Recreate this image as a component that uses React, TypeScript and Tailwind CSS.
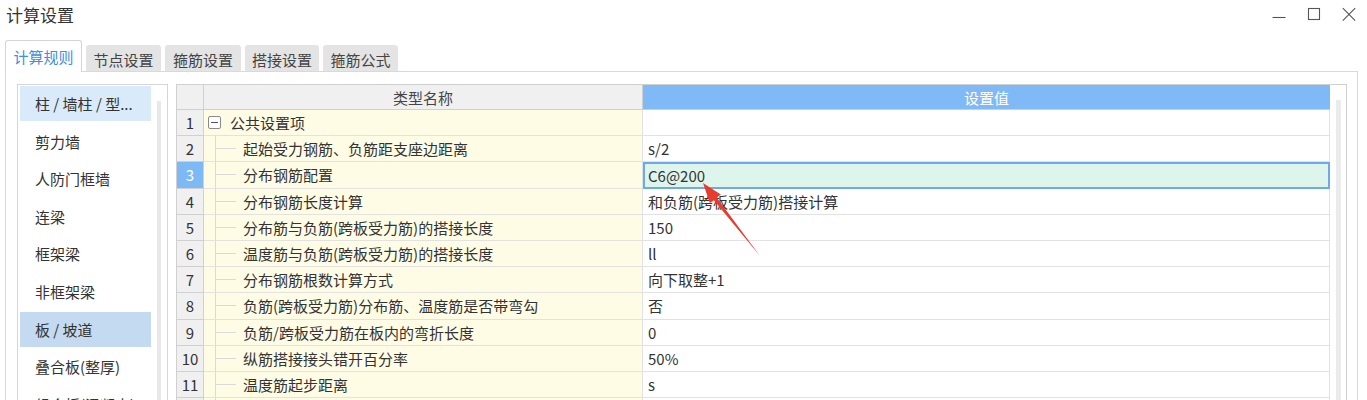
import React from "react"

const navItems = [
  "柱 / 墙柱 / 型...",
  "剪力墙",
  "人防门框墙",
  "连梁",
  "框架梁",
  "非框架梁",
  "板 / 坡道",
  "叠合板(整厚)",
  "组合板(混凝土)",
]

const tabs = [
  { label: "节点设置", w: "w-[75px]" },
  { label: "箍筋设置", w: "w-[76px]" },
  { label: "搭接设置", w: "w-[74px]" },
  { label: "箍筋公式", w: "w-[75px]" },
]

const rows = [
  { name: "公共设置项", value: "", group: true },
  { name: "起始受力钢筋、负筋距支座边距离", value: "s/2" },
  { name: "分布钢筋配置", value: "C6@200" },
  { name: "分布钢筋长度计算", value: "和负筋(跨板受力筋)搭接计算" },
  { name: "分布筋与负筋(跨板受力筋)的搭接长度", value: "150" },
  { name: "温度筋与负筋(跨板受力筋)的搭接长度", value: "ll" },
  { name: "分布钢筋根数计算方式", value: "向下取整+1" },
  { name: "负筋(跨板受力筋)分布筋、温度筋是否带弯勾", value: "否" },
  { name: "负筋/跨板受力筋在板内的弯折长度", value: "0" },
  { name: "纵筋搭接接头错开百分率", value: "50%" },
  { name: "温度筋起步距离", value: "s" },
]

export default function App() {
  const selectedRow = 2

  return (
    <div className="relative w-[1367px] h-[400px] overflow-hidden bg-white text-[#333] font-['Noto_Sans_CJK_SC','Microsoft_YaHei',sans-serif]">
      {/* Title bar */}
      <div className="flex h-[30px] justify-between">
        <div className="pl-[6px] pt-[5px] text-[17px] leading-[20px]">计算设置</div>
        <div className="flex gap-[21px] pr-[11px] pt-[7px] text-[#555]">
          <svg width="14" height="14" viewBox="0 0 14 14" fill="none" stroke="currentColor" strokeWidth="1.1">
            <path d="M0.5 10.5h13" />
          </svg>
          <svg width="14" height="14" viewBox="0 0 14 14" fill="none" stroke="currentColor" strokeWidth="1.1">
            <rect x="1.5" y="1.5" width="11" height="11" />
          </svg>
          <svg width="14" height="14" viewBox="0 0 14 14" fill="none" stroke="currentColor" strokeWidth="1.1">
            <path d="M0.8 1.2l12.4 12.4M13.2 1.2L0.8 13.6" />
          </svg>
        </div>
      </div>

      {/* Tabs */}
      <div className="flex items-end gap-[4px] pl-[5px] pt-[10px]">
        <div className="relative z-10 -mb-px flex h-[32px] w-[77px] items-center justify-center rounded-t-[3px] border border-b-0 border-[#d4d4d4] bg-white text-[15px] leading-none text-[#3d8fe0]">
          计算规则
        </div>
        {tabs.map((t) => (
          <div
            key={t.label}
            className={`flex h-[26px] ${t.w} items-center justify-center rounded-t-[3px] bg-[#e4e4e4] pt-[2px] text-[15px] leading-none text-[#444]`}
          >
            {t.label}
          </div>
        ))}
      </div>

      {/* Panel */}
      <div className="ml-[5px] flex h-[400px] w-[1353px] gap-[8px] border border-[#d9d9d9] pl-[11px] pt-[12px]">
        {/* Left nav */}
        <div className="flex h-[330px] w-[151px] border border-[#d6d6d6] pl-[2px] pt-[1px]">
          <div className="flex w-[131px] flex-col gap-[2.6px]">
            {navItems.map((item, i) => (
              <div
                key={item}
                className={`flex h-[35px] shrink-0 items-center pl-[15px] text-[15px] leading-none ${
                  i === 0 ? "bg-[#d9eafb]" : i === 6 ? "bg-[#c4daf1]" : ""
                }`}
              >
                {item}
              </div>
            ))}
          </div>
          <div className="ml-[6px] mt-[15px] h-full w-[4px] bg-[#e8e8e8]" />
        </div>

        {/* Table */}
        <div className="flex h-[330px] w-[1171px] border border-[#d0d0d0]">
          <div className="flex w-[1153px] flex-col">
            {/* Header */}
            <div className="flex h-[25px] shrink-0 border-b border-[#cfcfcf] text-[15px] leading-none">
              <div className="w-[27px] border-r border-[#d0d0d0] bg-[#f0f0f0]" />
              <div className="flex w-[439px] items-center justify-center border-r border-[#d0d0d0] bg-[#f0f0f0] text-[#444]">
                类型名称
              </div>
              <div className="flex flex-1 items-center justify-center bg-[#7fbaf7] text-white">设置值</div>
            </div>

            {rows.map((r, i) => {
              const sel = i === selectedRow
              return (
                <div key={i} className="flex h-[26.2px] shrink-0 text-[15px] leading-none">
                  <div
                    className={`flex w-[27px] items-center justify-center border-r border-b border-[#d0d0d0] ${
                      sel ? "bg-[#7db9f5] text-white" : "bg-[#f0f0f0] text-[#333]"
                    }`}
                  >
                    {i + 1}
                  </div>
                  <div className="flex w-[439px] items-center border-r border-b border-[#e2e2e2] bg-[#fffce6]">
                    {r.group ? (
                      <>
                        <div className="ml-[4px] flex h-[13px] w-[13px] items-center justify-center rounded-[2px] border border-[#8a8a8a] bg-white">
                          <div className="h-px w-[7px] bg-[#555]" />
                        </div>
                        <span className="ml-[9px]">{r.name}</span>
                      </>
                    ) : (
                      <>
                        <div className="ml-[11px] w-px self-stretch bg-[#dadada]" />
                        <div className="h-px w-[20px] bg-[#dadada]" />
                        <span className="ml-[7px] whitespace-nowrap">{r.name}</span>
                      </>
                    )}
                  </div>
                  <div
                    className={`flex flex-1 items-center ${
                      sel
                        ? "border-2 border-[#6ea9ea] bg-[#ddf5eb] pl-[3px]"
                        : "border-r border-b border-[#e2e2e2] pl-[5px]"
                    }`}
                  >
                    {r.value}
                  </div>
                </div>
              )
            })}
            {/* next row, mostly below the fold */}
            <div className="flex h-[26.2px] shrink-0">
              <div className="w-[27px] border-r border-[#d0d0d0] bg-[#f0f0f0]" />
              <div className="flex w-[439px] border-r border-[#e2e2e2] bg-[#fffce6]">
                <div className="ml-[11px] w-px bg-[#dadada]" />
              </div>
              <div className="flex-1 border-r border-[#e2e2e2]" />
            </div>
          </div>
          {/* Scrollbar */}
          <div className="flex w-[15px] flex-col">
            <div className="ml-[6px] mt-[15px] h-full w-[5px] bg-[#ebebeb]" />
          </div>
        </div>
      </div>

      {/* Red annotation arrow */}
      <svg
        className="pointer-events-none absolute left-0 top-0"
        width="1367"
        height="400"
        viewBox="0 0 1367 400"
      >
        <polygon
          points="703,183 709.8,203.1 713.9,200.2 760,256 716.7,197.6 720.8,194.5"
          fill="#ea3a2e"
        />
      </svg>
    </div>
  )
}
